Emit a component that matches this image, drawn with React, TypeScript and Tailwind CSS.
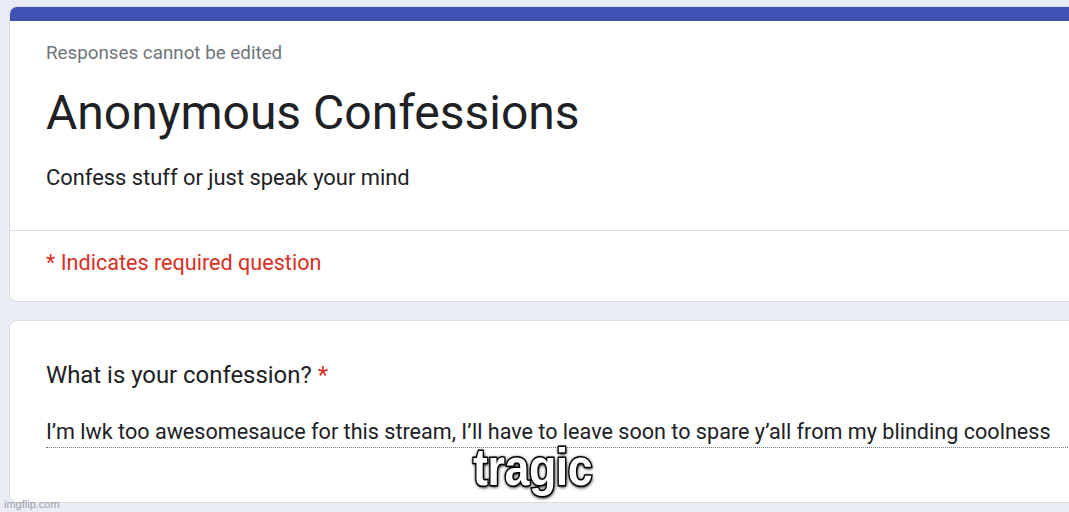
export default function App() {
  return (
    <div className="relative h-[512px] w-[1069px] overflow-hidden bg-[#ebedf6] font-['Roboto',sans-serif]">
      <div className="flex w-[1100px] flex-col gap-[18px] pl-[9px] pt-[6px]">
        {/* Header card */}
        <div className="overflow-hidden rounded-lg border border-[#dadce0] bg-white">
          <div className="h-[14px] bg-[#3f51b5]" />
          <div className="px-[36px] pt-[19px] pb-[37px]">
            <p className="text-[18.8px] leading-[26px] text-[#70757a]">Responses cannot be edited</p>
            <h1 className="mt-[19px] text-[48px] leading-[56px] text-[#202124]">Anonymous Confessions</h1>
            <p className="mt-[22px] text-[21.9px] leading-[30px] text-[#202124]">Confess stuff or just speak your mind</p>
          </div>
          <div className="border-t border-[#dadce0] px-[36px] pt-[17px] pb-[23px]">
            <p className="text-[21.6px] leading-[30px] text-[#d93025]">* Indicates required question</p>
          </div>
        </div>

        {/* Question card */}
        <div className="h-[183px] rounded-lg border border-[#dadce0] bg-white px-[36px] pt-[38px]">
          <p className="text-[23.9px] leading-[32px] text-[#202124]">
            What is your confession? <span className="text-[#d93025]">*</span>
          </p>
          <div className="mt-[26px] w-[1030px] border-b border-dotted border-[#70757a]">
            <p className="whitespace-nowrap text-[21.6px] leading-[30px] text-[#202124]">
              I’m lwk too awesomesauce for this stream, I’ll have to leave soon to spare y’all from my blinding coolness
            </p>
          </div>
        </div>
      </div>

      {/* meme caption */}
      <div className="absolute left-[473px] top-[439px] origin-left scale-x-[0.86] font-['Liberation_Sans',sans-serif] text-[52px] leading-[56px] font-bold tracking-[-0.5px] text-white [paint-order:stroke_fill] [-webkit-text-stroke:3px_black] [text-shadow:0_0_3px_#000,0_0_4px_#000,1px_2px_4px_#000]">
        tragic
      </div>

      <div className="absolute left-[4px] top-[496px] font-['Liberation_Sans',sans-serif] text-[11px] text-[#9aa0a6]">
        imgflip.com
      </div>
    </div>
  );
}
